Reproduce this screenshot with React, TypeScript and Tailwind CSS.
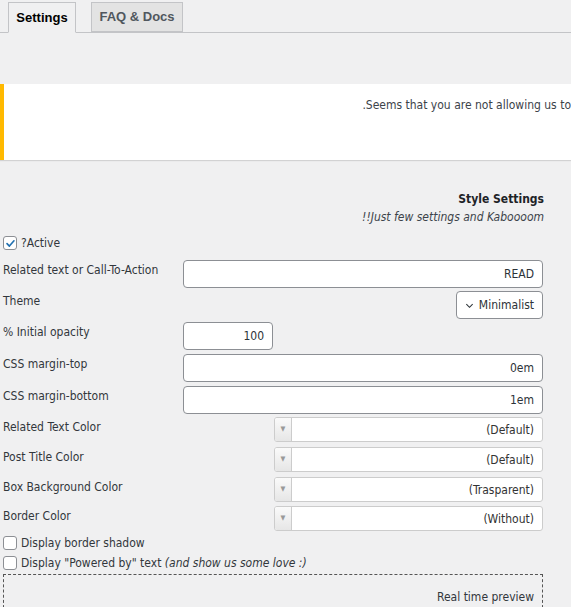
import React from "react";

const font = "font-['DejaVu_Sans_Condensed','DejaVu_Sans',sans-serif]";

const Label = ({ children }: { children: React.ReactNode }) => (
  <div className="w-[183px] shrink-0 pl-[3px] pt-[1px] text-[12px] text-[#32373c]">{children}</div>
);

const TextInput = ({ value, w = "flex-1" }: { value: string; w?: string }) => (
  <div
    className={`${w} h-[28px] rounded-[4px] border border-[#8c8f94] bg-white px-[8px] flex items-center justify-end text-[12px] text-[#2c3338]`}
  >
    {value}
  </div>
);

const ColorPick = ({ value }: { value: string }) => (
  <div className="ml-auto w-[269px] h-[25px] flex rounded-[3px] border border-[#ccc] bg-white overflow-hidden">
    <div className="w-[17px] border-r border-[#ccc] bg-gradient-to-b from-[#fafafa] to-[#e6e6e6] flex items-center justify-center text-[7px] text-[#999]">
      ▼
    </div>
    <div className="flex-1 flex items-center justify-end pr-[8px] text-[12px] text-[#333]">{value}</div>
  </div>
);

const Check = ({ on }: { on?: boolean }) => (
  <div className="w-[14px] h-[14px] rounded-[3px] border border-[#8c8f94] bg-white flex items-center justify-center">
    {on && (
      <svg viewBox="0 0 12 12" className="w-[11px] h-[11px]">
        <path d="M2.2 6.2 L4.8 8.8 L9.8 3" fill="none" stroke="#2271b1" strokeWidth="1.8" strokeLinecap="round" strokeLinejoin="round" />
      </svg>
    )}
  </div>
);

export default function App() {
  return (
    <div className={`w-[571px] h-[607px] overflow-hidden bg-[#f0f0f1] ${font}`}>
      {/* Tabs */}
      <div className="h-[33px] border-b border-[#c3c4c7] flex items-end pl-[8px] gap-[15px] font-['Liberation_Sans',sans-serif] text-[13px] font-bold">
        <div className="h-[31px] w-[68px] -mb-px border border-[#c3c4c7] border-b-[#f0f0f1] bg-[#f0f0f1] flex items-center justify-center text-black">
          Settings
        </div>
        <div className="h-[30px] w-[92px] border border-[#c3c4c7] bg-[#e3e3e3] flex items-center justify-center text-[#50575e]">
          FAQ &amp; Docs
        </div>
      </div>

      {/* Notice */}
      <div className="mt-[51px] h-[76px] bg-white border-l-4 border-[#ffb900] shadow-[0_1px_1px_rgba(0,0,0,0.12)] flex justify-end pt-[12px]">
        <p className="text-[12px] text-[#3c434a] whitespace-nowrap">.Seems that you are not allowing us to</p>
      </div>

      {/* Header */}
      <div className="mt-[30px] pr-[27px] text-right">
        <div className="text-[12px] font-bold text-[#1d2327]">Style Settings</div>
        <div className="text-[12px] italic text-[#3c434a]">!!Just few settings and Kaboooom</div>
      </div>

      <div className="w-[543px] text-[12px] text-[#32373c]">
        <div className="mt-[8px] flex items-center gap-[4px] pl-[3px]">
          <Check on />
          <span>?Active</span>
        </div>

        <div className="mt-[8px] flex">
          <Label>Related text or Call-To-Action</Label>
          <TextInput value="READ" />
        </div>

        <div className="mt-[3px] flex">
          <Label>Theme</Label>
          <div className="ml-auto h-[28px] w-[87px] rounded-[4px] border border-[#8c8f94] bg-white flex items-center justify-end gap-[5px] pr-[8px] text-[12px] text-[#2c3338]">
            <svg viewBox="0 0 10 10" className="w-[9px] h-[9px]">
              <path d="M1.5 3.5 L5 7 L8.5 3.5" fill="none" stroke="#2c3338" strokeWidth="1.2" />
            </svg>
            Minimalist
          </div>
        </div>

        <div className="mt-[3px] flex">
          <Label>% Initial opacity</Label>
          <TextInput value="100" w="w-[90px]" />
        </div>

        <div className="mt-[4px] flex">
          <Label>CSS margin-top</Label>
          <TextInput value="0em" />
        </div>

        <div className="mt-[4px] flex">
          <Label>CSS margin-bottom</Label>
          <TextInput value="1em" />
        </div>

        <div className="mt-[3px] flex">
          <Label>Related Text Color</Label>
          <ColorPick value="(Default)" />
        </div>
        <div className="mt-[5px] flex">
          <Label>Post Title Color</Label>
          <ColorPick value="(Default)" />
        </div>
        <div className="mt-[5px] flex">
          <Label>Box Background Color</Label>
          <ColorPick value="(Trasparent)" />
        </div>
        <div className="mt-[4px] flex">
          <Label>Border Color</Label>
          <ColorPick value="(Without)" />
        </div>

        <div className="mt-[3px] flex items-center gap-[4px] pl-[3px]">
          <Check />
          <span>Display border shadow</span>
        </div>
        <div className="mt-[2px] flex items-center gap-[4px] pl-[3px]">
          <Check />
          <span>
            Display "Powered by" text <i>(and show us some love :)</i>
          </span>
        </div>

        <div className="mt-[2px] ml-[3px] h-[60px] border border-dashed border-[#555] pt-[13px] pr-[8px] text-right">
          Real time preview
        </div>
      </div>
    </div>
  );
}
